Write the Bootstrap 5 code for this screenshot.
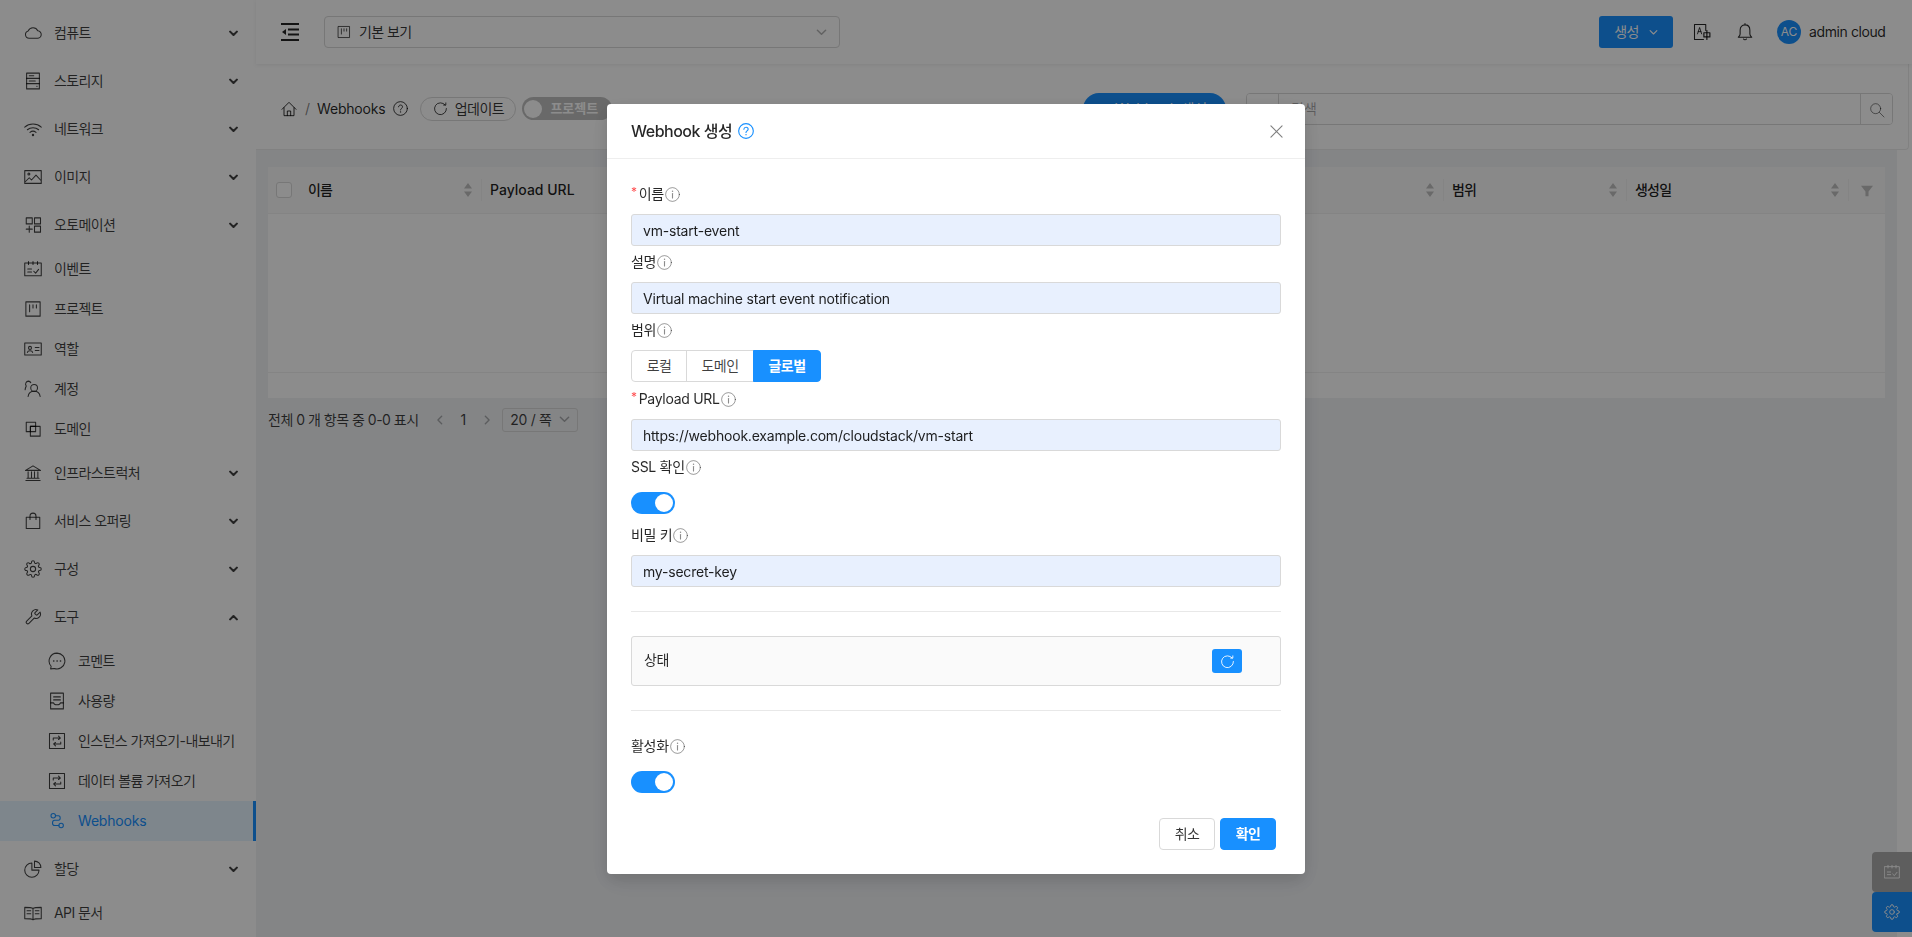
<!DOCTYPE html>
<html lang="ko">
<head>
<meta charset="utf-8">
<title>Webhooks</title>
<link href="https://cdn.jsdelivr.net/npm/bootstrap@5.3.0/dist/css/bootstrap.min.css" rel="stylesheet">
<style>
:root{--acc:#1890ff;--line:#d9d9d9;--ink:rgba(0,0,0,.85)}
html,body{height:100%}
body{font-family:Inter,"Noto Sans CJK KR",sans-serif;font-size:14px;color:var(--ink);background:#fff;overflow:hidden;line-height:22px}
.ico{width:18px;height:18px;fill:none;stroke:currentColor;stroke-width:1.4;stroke-linecap:round;stroke-linejoin:round;flex:none}
.ico-14{width:14px;height:14px}
.ico-15{width:15px;height:15px}
.ico-16{width:16px;height:16px}
.ico-12{width:12px;height:12px}
.ko-tight{letter-spacing:-.6px}
.lat-tight{letter-spacing:-.2px}
.side-nav{width:256px;flex:none;padding-top:9px;background:#fff;height:100vh;overflow:hidden}
.side-link{display:flex;align-items:center;height:40px;padding-left:24px;color:rgba(0,0,0,.75);gap:12px;text-decoration:none;white-space:nowrap;letter-spacing:-.6px}
.side-parent{height:48px;padding-right:18px}
.side-parent .caret-ico{margin-left:auto;width:9px;height:9px;stroke-width:2.8}
.side-sub{padding:0 0 4px}
.side-sub .side-link{padding-left:48px}
.side-on{background:#e6f4ff;color:var(--acc);border-right:3px solid var(--acc);letter-spacing:-.2px}
.main-col{min-width:0}
.top-bar{height:64px;background:#fff;padding:0 24px 0 25px;box-shadow:0 1px 4px rgba(0,21,41,.08);position:relative;gap:25px}
.view-pick{width:516px;height:32px;border:1px solid var(--line);border-radius:4px;padding:0 12px;gap:8px;color:rgba(0,0,0,.8);letter-spacing:-.6px}
.view-pick .caret-ico{margin-left:auto;width:11px;height:11px;color:rgba(0,0,0,.3);stroke-width:1.6}
.make-btn{width:74px;height:32px;background:var(--acc);color:#fff;border:0;border-radius:3px;padding:0;gap:10px;font-size:14px;letter-spacing:-.6px}
.make-btn svg{width:9px;height:9px;stroke-width:1.5}
.gap-a{margin-left:20px}.gap-b{margin-left:25px}.gap-c{margin-left:23px}
.ava{width:24px;height:24px;border-radius:50%;background:var(--acc);color:#fff;font-size:12px;line-height:24px;text-align:center}
.who{letter-spacing:-.4px;width:79px;white-space:nowrap}
.page-head{height:86px;padding:4px 15px 0 25px;margin-right:3px;background:#fff;border:solid #ececec;border-width:0 1px 1px 0;border-bottom-right-radius:4px}
.crumb-sep{margin:0 7px 0 8px;color:rgba(0,0,0,.5)}
.pill-btn{height:24px;width:96px;border:1px solid var(--line);border-radius:12px;background:#fff;padding:0;gap:7px;font-size:14px;color:rgba(0,0,0,.8);margin-left:12px;letter-spacing:-.6px}
.pill-btn svg{width:15px;height:15px}
.scope-tog{width:90px;height:23px;border-radius:12px;background:rgba(0,0,0,.25);color:#fff;font-size:13px;font-weight:600;padding:0 2px;gap:8px;margin-left:6px;line-height:23px}
.scope-tog i{width:18px;height:18px;border-radius:50%;background:#fff;display:block;flex:none}
.add-pill{width:143px;height:32px;border-radius:16px;background:var(--acc);color:#fff;border:0;margin-left:auto;font-size:14px}
.find-box{width:647px;height:32px;margin-left:20px;border:1px solid var(--line);border-radius:4px;overflow:hidden}
.find-box button{width:32px;border:0;background:#fff;padding:0;color:rgba(0,0,0,.5)}
.find-box button:first-child{border-right:1px solid var(--line)}
.find-box button:last-child{border-left:1px solid var(--line)}
.find-box input{border:0;outline:0;flex:1;padding:0 12px;font-size:14px;min-width:0}
.find-box input::placeholder{color:rgba(0,0,0,.35)}
.work-area{margin-right:15px;background:#f0f2f5;height:787px;padding:17px 12px 0}
.grid-card{background:#fff}
.grid-card .table{table-layout:fixed;margin:0;--bs-table-bg:transparent;font-size:14px}
.grid-card th{height:46px;padding:0;background:#fafafa;font-weight:500;color:rgba(0,0,0,.88);border-bottom:1px solid #f0f0f0;vertical-align:middle}
.grid-card td{height:159px;border-bottom:1px solid #f0f0f0;padding:0}
.th-in{display:flex;align-items:center;justify-content:space-between;height:22px;padding:0 9px 0 8px;border-right:1px solid #f0f0f0}
.th-ko{letter-spacing:-.8px}
.fake-check{display:block;width:16px;height:16px;border:1px solid var(--line);border-radius:3px;background:#fff;margin-left:8px}
.sort-ico{width:8px;height:14px;fill:#bfbfbf;flex:none}
.grid-tail{height:25px}
.pager{margin-top:10px;height:24px;color:rgba(0,0,0,.75)}
.pager .arrow{width:10px;height:10px;color:rgba(0,0,0,.3);stroke-width:1.6}
.pager-sum{letter-spacing:-.5px}
.size-pick{width:76px;height:24px;border:1px solid var(--line);border-radius:3px;padding:0 7px;margin-left:10px;justify-content:space-between;letter-spacing:-.3px}
.size-pick svg{width:11px;height:11px;color:rgba(0,0,0,.3);stroke-width:1.6}
.float-dock{position:fixed;right:0;bottom:5px;width:40px}
.float-dock div{height:40px;display:flex;align-items:center;justify-content:center;color:#fff;border-radius:4px 0 0 4px}
.dock-grey{background:#ababab}
.dock-blue{background:var(--acc)}
.modal-backdrop.show{opacity:.45}
.hook-dialog{width:698px;max-width:698px;margin:104px auto 0}
.hook-dialog .modal-content{border:0;border-radius:4px;box-shadow:0 6px 16px rgba(0,0,0,.12),0 9px 28px rgba(0,0,0,.05)}
.hook-dialog .modal-header{height:55px;padding:0 22px 0 24px;border-bottom:1px solid #eee;align-items:center}
.hook-dialog .modal-title{font-size:16px;font-weight:500;line-height:22px;gap:6px;letter-spacing:-.5px}
.hook-dialog .modal-title svg{width:16px;height:16px;color:var(--acc);stroke-width:1.7}
.close-x{width:13px;height:13px;color:rgba(0,0,0,.5);stroke-width:1.2}
.hook-dialog .modal-body{padding:24px 24px 24px}
.fld-label{display:flex;align-items:center;height:22px;margin-bottom:9px;gap:1px;color:rgba(0,0,0,.85);letter-spacing:-.3px}
.fld-label svg{width:15px;height:15px;color:rgba(0,0,0,.45);stroke-width:1.4}
.req{color:#ff4d4f;font-size:12px;margin-right:1px;line-height:14px;align-self:flex-start;margin-top:2px}
.fld-row{margin-bottom:5px}
.fld-input{height:32px;border:1px solid var(--line);border-radius:3px;background:#e8f0fe;padding:0 11px;font-size:14px;color:rgba(0,0,0,.88);line-height:22px;letter-spacing:-.2px}
.fld-input:focus{background:#e8f0fe;box-shadow:none;border-color:var(--line)}
.seg-wrap{margin-bottom:1px;display:inline-flex;height:32px;vertical-align:top}
.seg-wrap .seg-opt{font-size:14px;height:32px;padding:0;line-height:30px;border-color:var(--line);color:rgba(0,0,0,.75);--bs-btn-border-radius:4px;background:#fff;letter-spacing:-.6px}
.seg-wrap .btn-check:checked+.seg-opt{background:var(--acc);border-color:var(--acc);color:#fff;font-weight:600}
.seg-w55{width:56px}.seg-w68{width:68px}
.tog-row{height:32px;display:flex;align-items:center;padding:0;margin:0}
.tog-row .form-check-input{width:44px;height:22px;margin:0;float:none;border:0;background-color:var(--acc);background-position:right center;background-image:url("data:image/svg+xml,%3csvg xmlns='http://www.w3.org/2000/svg' viewBox='-4 -4 8 8'%3e%3ccircle r='3.27' fill='%23fff'/%3e%3c/svg%3e");box-shadow:none}
.rule-line{margin:24px 0;border:0;border-top:1px solid #e8e8e8;opacity:1}
.state-box{height:50px;border:1px solid var(--line);border-radius:3px;background:#fafafa;padding:0 38px 0 12px}
.state-txt{padding-bottom:2px;letter-spacing:-.5px}
.state-btn{width:30px;height:24px;background:var(--acc);color:#fff;border:0;border-radius:3px;padding:0}
.state-btn svg{width:15px;height:15px}
.foot-btns{margin-top:20px;padding-right:5px;gap:5px}
.foot-btn{width:56px;height:32px;padding:0;font-size:14px;border-radius:4px;line-height:30px;letter-spacing:-.6px}
.foot-no{border:1px solid var(--line);background:#fff;color:rgba(0,0,0,.8)}
.foot-yes{border:1px solid var(--acc);background:var(--acc);color:#fff;font-weight:600}
</style>
</head>
<body>
<svg width="0" height="0" class="position-absolute">
<defs>
<symbol id="i-cloud" viewBox="0 0 24 24"><path d="M6.8 19a5 5 0 0 1-1.200-9.800A7 7 0 0 1 18.400 9a5 5 0 0 1-.9 10z"/></symbol>
<symbol id="i-db" viewBox="0 0 24 24"><rect x="3.500" y="1.500" width="17" height="21"/><path d="M3.500 8.500h17M3.500 15.500h17M7 5h6M7 12h8M17 19h.5"/></symbol>
<symbol id="i-wifi" viewBox="0 0 24 24"><path d="M1 9.500c6-5.500 16-5.500 22 0M4.500 13c4-3.500 11-3.500 15 0M8 16.500c2.200-1.800 5.800-1.800 8 0"/><circle cx="12" cy="20" r=".9"/></symbol>
<symbol id="i-pic" viewBox="0 0 24 24"><rect x="1" y="3.500" width="22" height="17"/><circle cx="6.500" cy="8" r="1.300"/><path d="M2 18l5-5 3 3 6-6.500 6 6.500"/></symbol>
<symbol id="i-apps" viewBox="0 0 24 24"><rect x="3" y="2.500" width="8" height="8"/><rect x="14" y="2.500" width="8" height="8"/><rect x="14" y="13.500" width="8" height="8"/><path d="M7 13.500v8M3 17.500h8"/></symbol>
<symbol id="i-sched" viewBox="0 0 24 24"><rect x="1" y="4" width="22" height="17"/><path d="M6 2v4M12 2v4M18 2v4M5 12h5M5 16h5M13 15l2.500 2.500 4-5"/></symbol>
<symbol id="i-proj" viewBox="0 0 24 24"><rect x="2.500" y="2.500" width="19" height="19"/><path d="M7.500 6.500v9M12 6.500v4M16.500 6.500v4"/></symbol>
<symbol id="i-idc" viewBox="0 0 24 24"><rect x="1" y="4" width="22" height="16"/><circle cx="8" cy="10.500" r="2"/><path d="M4.500 16.500c.5-3 6.500-3 7 0M15 10h5M15 14h5"/></symbol>
<symbol id="i-team" viewBox="0 0 24 24"><circle cx="13.500" cy="10.500" r="4.500"/><path d="M5.500 22c.5-5 3.500-7 8-7s7.500 2 8 7M9 3.500A4 4 0 0 0 6 1.500a4 4 0 0 0-3 6.500c-.8 1.600-1.400 3-1.500 5"/></symbol>
<symbol id="i-block" viewBox="0 0 24 24"><path d="M8.500 15.500H3V3h12.500v5.500"/><rect x="8.500" y="8.500" width="13" height="13"/><path d="M8.500 8.500h7v7h-7z"/></symbol>
<symbol id="i-bank" viewBox="0 0 24 24"><path d="M2 8.500L12 2.500l10 6zM2.500 22h19M4 19h16M5.500 10.500V19M10 10.500V19M14 10.500V19M18.500 10.500V19"/></symbol>
<symbol id="i-bag" viewBox="0 0 24 24"><rect x="3" y="7" width="18" height="15"/><path d="M8 10V5.500a4 4 0 0 1 8 0V10"/></symbol>
<symbol id="i-gear" viewBox="0 0 24 24"><circle cx="12" cy="12" r="3.500"/><path d="M19.400 15a1.650 1.650 0 0 0 .33 1.820l.06.06a2 2 0 0 1 0 2.830 2 2 0 0 1-2.830 0l-.06-.06a1.650 1.650 0 0 0-1.820-.33 1.650 1.650 0 0 0-1 1.510V21a2 2 0 0 1-2 2 2 2 0 0 1-2-2v-.09A1.650 1.650 0 0 0 9 19.400a1.650 1.650 0 0 0-1.820.33l-.06.06a2 2 0 0 1-2.830 0 2 2 0 0 1 0-2.830l.06-.06a1.650 1.650 0 0 0 .33-1.820 1.650 1.650 0 0 0-1.510-1H3a2 2 0 0 1-2-2 2 2 0 0 1 2-2h.09A1.650 1.650 0 0 0 4.600 9a1.650 1.650 0 0 0-.33-1.820l-.06-.06a2 2 0 0 1 0-2.830 2 2 0 0 1 2.830 0l.06.06a1.650 1.650 0 0 0 1.820.33H9a1.650 1.650 0 0 0 1-1.510V3a2 2 0 0 1 2-2 2 2 0 0 1 2 2v.09a1.650 1.650 0 0 0 1 1.510 1.650 1.650 0 0 0 1.820-.33l.06-.06a2 2 0 0 1 2.830 0 2 2 0 0 1 0 2.830l-.06.06a1.650 1.650 0 0 0-.33 1.820V9a1.650 1.650 0 0 0 1.510 1H21a2 2 0 0 1 2 2 2 2 0 0 1-2 2h-.09a1.650 1.650 0 0 0-1.510 1z"/></symbol>
<symbol id="i-tool" viewBox="0 0 24 24"><path d="M14.700 6.300a1 1 0 0 0 0 1.400l1.600 1.600a1 1 0 0 0 1.400 0l3.770-3.770a6 6 0 0 1-7.940 7.940l-6.910 6.910a2.120 2.120 0 0 1-3-3l6.910-6.910a6 6 0 0 1 7.940-7.940l-3.760 3.760z"/></symbol>
<symbol id="i-chat" viewBox="0 0 24 24"><path d="M12 1.500a10.500 10.500 0 1 1-3.500 20.400L3.500 22.500l.7-3.500A10.500 10.500 0 0 1 12 1.500z"/><path d="M7.500 12h.3M12 12h.3M16.500 12h.3" stroke-width="2"/></symbol>
<symbol id="i-recon" viewBox="0 0 24 24"><rect x="3.500" y="1.500" width="17" height="21"/><path d="M7.500 6.500h9M7.500 10.500h9M3.500 14.500h4c.5 3.500 8.500 3.500 9 0h4"/></symbol>
<symbol id="i-swap" viewBox="0 0 24 24"><rect x="2" y="2" width="20" height="20"/><path d="M7 10.500V8h9M14 5.500L16.500 8 14 10M17 13.500V16H8M10 18.500L7.500 16 10 14"/></symbol>
<symbol id="i-hook" viewBox="0 0 24 24"><circle cx="7" cy="5" r="3"/><circle cx="17.500" cy="18" r="3"/><path d="M10 5h4c3 0 3 6 0 6h-5c-4 0-4 7 0 7h5.500"/></symbol>
<symbol id="i-pie" viewBox="0 0 24 24"><path d="M10.500 4a9.500 9.500 0 1 0 9.500 9.500H10.500z"/><path d="M14 1.500a8.500 8.500 0 0 1 8.500 8.500H14z"/></symbol>
<symbol id="i-book" viewBox="0 0 24 24"><path d="M12 6c-2-1.500-7-1.500-11-1.500v15c4 0 9 0 11 1.500 2-1.500 7-1.500 11-1.500v-15C19 4.500 14 4.500 12 6zM12 6v15M4 9h5M4 13h5M15 9h5M15 13h5"/></symbol>
<symbol id="i-down" viewBox="0 0 12 12"><path d="M1.500 3.500L6 8l4.500-4.500"/></symbol>
<symbol id="i-up" viewBox="0 0 12 12"><path d="M1.500 8.500L6 4l4.500 4.500"/></symbol>
<symbol id="i-left" viewBox="0 0 12 12"><path d="M8 1.500L3.500 6 8 10.500"/></symbol>
<symbol id="i-right" viewBox="0 0 12 12"><path d="M4 1.500L8.500 6 4 10.500"/></symbol>
<symbol id="i-menu" viewBox="0 0 18 18"><path d="M0 1h18M0 17h18M7 6.500h11M7 11.500h11" stroke-width="1.800" stroke-linecap="butt"/><path d="M1 9l4-3v6z" fill="currentColor" stroke="none"/></symbol>
<symbol id="i-trans" viewBox="0 0 24 24"><path d="M14 22H2V2h15v8"/><path d="M6 14.500L8.800 6l2.700 8.500M7 11.500h3.500" stroke-width="1.200"/><rect x="14.500" y="13" width="8" height="5.500" stroke-width="1.600"/><path d="M18.500 10v12" stroke-width="1.600"/></symbol>
<symbol id="i-bell" viewBox="0 0 24 24"><path d="M12 2.500c-4 0-6.500 3-6.500 7v5c0 2.500-1.500 3.500-2.500 4.500h18c-1-1-2.500-2-2.500-4.500v-5c0-4-2.500-7-6.500-7zM12 .8v1.700M10 21.300c1 1.300 3 1.300 4 0"/></symbol>
<symbol id="i-home" viewBox="0 0 24 24"><path d="M1.500 12.500L12 2l10.500 10.500M4.500 10v12h15V10M9.500 22v-7h5v7"/></symbol>
<symbol id="i-help" viewBox="0 0 24 24"><circle cx="12" cy="12" r="11"/><path d="M8.800 9.300c.3-4 6.400-4 6.400 0 0 2.600-3.200 2.500-3.200 5"/><path d="M12 17.500h.1" stroke-width="2"/></symbol>
<symbol id="i-info" viewBox="0 0 24 24"><circle cx="12" cy="12" r="11"/><path d="M12 10.500v7" stroke-width="1.800"/><path d="M12 6.800h.1" stroke-width="2.200"/></symbol>
<symbol id="i-reload" viewBox="0 0 24 24"><path d="M19.500 6.500A9.500 9.500 0 1 0 21.500 12"/><path d="M20.500 3v3.500H17"/></symbol>
<symbol id="i-search" viewBox="0 0 24 24"><circle cx="10" cy="10" r="7.500"/><path d="M15.500 15.500l7 7"/></symbol>
<symbol id="i-x" viewBox="0 0 14 14"><path d="M1 1l12 12M13 1L1 13"/></symbol>
<symbol id="i-sort" viewBox="0 0 8 14"><path d="M4 0l4 5.500H0zM4 14l4-5.500H0z" stroke="none"/></symbol>
<symbol id="i-funnel" viewBox="0 0 14 14"><path d="M0 1h14L8.800 7.500V13H5.200V7.500z" fill="#bfbfbf" stroke="none"/></symbol>
</defs>
</svg>

<div class="d-flex vh-100">
  <aside class="side-nav">
    <a class="side-link side-parent" href="#"><svg class="ico"><use href="#i-cloud"/></svg>컴퓨트<svg class="ico caret-ico"><use href="#i-down"/></svg></a>
    <a class="side-link side-parent" href="#"><svg class="ico"><use href="#i-db"/></svg>스토리지<svg class="ico caret-ico"><use href="#i-down"/></svg></a>
    <a class="side-link side-parent" href="#"><svg class="ico"><use href="#i-wifi"/></svg>네트워크<svg class="ico caret-ico"><use href="#i-down"/></svg></a>
    <a class="side-link side-parent" href="#"><svg class="ico"><use href="#i-pic"/></svg>이미지<svg class="ico caret-ico"><use href="#i-down"/></svg></a>
    <a class="side-link side-parent" href="#"><svg class="ico"><use href="#i-apps"/></svg>오토메이션<svg class="ico caret-ico"><use href="#i-down"/></svg></a>
    <a class="side-link" href="#"><svg class="ico"><use href="#i-sched"/></svg>이벤트</a>
    <a class="side-link" href="#"><svg class="ico"><use href="#i-proj"/></svg>프로젝트</a>
    <a class="side-link" href="#"><svg class="ico"><use href="#i-idc"/></svg>역할</a>
    <a class="side-link" href="#"><svg class="ico"><use href="#i-team"/></svg>계정</a>
    <a class="side-link" href="#"><svg class="ico"><use href="#i-block"/></svg>도메인</a>
    <a class="side-link side-parent" href="#"><svg class="ico"><use href="#i-bank"/></svg>인프라스트럭처<svg class="ico caret-ico"><use href="#i-down"/></svg></a>
    <a class="side-link side-parent" href="#"><svg class="ico"><use href="#i-bag"/></svg>서비스 오퍼링<svg class="ico caret-ico"><use href="#i-down"/></svg></a>
    <a class="side-link side-parent" href="#"><svg class="ico"><use href="#i-gear"/></svg>구성<svg class="ico caret-ico"><use href="#i-down"/></svg></a>
    <a class="side-link side-parent" href="#"><svg class="ico"><use href="#i-tool"/></svg>도구<svg class="ico caret-ico"><use href="#i-up"/></svg></a>
    <div class="side-sub">
      <a class="side-link" href="#"><svg class="ico"><use href="#i-chat"/></svg>코멘트</a>
      <a class="side-link" href="#"><svg class="ico"><use href="#i-recon"/></svg>사용량</a>
      <a class="side-link" href="#"><svg class="ico"><use href="#i-swap"/></svg>인스턴스 가져오기-내보내기</a>
      <a class="side-link" href="#"><svg class="ico"><use href="#i-swap"/></svg>데이터 볼륨 가져오기</a>
      <a class="side-link side-on" href="#"><svg class="ico"><use href="#i-hook"/></svg>Webhooks</a>
    </div>
    <a class="side-link side-parent" href="#"><svg class="ico"><use href="#i-pie"/></svg>할당<svg class="ico caret-ico"><use href="#i-down"/></svg></a>
    <a class="side-link" href="#"><svg class="ico"><use href="#i-book"/></svg>API 문서</a>
  </aside>

  <div class="main-col flex-grow-1">
    <header class="top-bar d-flex align-items-center">
      <svg class="ico"><use href="#i-menu"/></svg>
      <div class="view-pick d-flex align-items-center"><svg class="ico ico-14"><use href="#i-proj"/></svg>기본 보기<svg class="ico caret-ico"><use href="#i-down"/></svg></div>
      <div class="d-flex align-items-center ms-auto">
        <button class="make-btn d-flex align-items-center justify-content-center">생성<svg class="ico"><use href="#i-down"/></svg></button>
        <svg class="ico gap-a"><use href="#i-trans"/></svg>
        <svg class="ico gap-b"><use href="#i-bell"/></svg>
        <div class="ava gap-c">AC</div>
        <span class="ms-2 who">admin cloud</span>
      </div>
    </header>

    <section class="page-head d-flex align-items-center">
      <svg class="ico ico-16"><use href="#i-home"/></svg>
      <span class="crumb-sep">/</span>
      <span class="lat-tight">Webhooks</span>
      <svg class="ico ico-15 ms-2"><use href="#i-help"/></svg>
      <button class="pill-btn d-flex align-items-center justify-content-center"><svg class="ico"><use href="#i-reload"/></svg>업데이트</button>
      <div class="scope-tog d-flex align-items-center"><i></i>프로젝트</div>
      <button class="add-pill">+ Webhook 생성</button>
      <div class="find-box d-flex">
        <button><svg class="ico ico-14"><use href="#i-funnel"/></svg></button>
        <input type="text" placeholder="검색">
        <button><svg class="ico ico-16"><use href="#i-search"/></svg></button>
      </div>
    </section>

    <section class="work-area">
      <div class="grid-card">
        <table class="table">
          <colgroup><col style="width:32px"><col style="width:182px"><col style="width:481px"><col style="width:481px"><col style="width:183px"><col style="width:222px"><col style="width:36px"></colgroup>
          <thead>
            <tr>
              <th><span class="fake-check"></span></th>
              <th class="th-ko"><div class="th-in">이름<svg class="sort-ico"><use href="#i-sort"/></svg></div></th>
              <th><div class="th-in">Payload URL<svg class="sort-ico"><use href="#i-sort"/></svg></div></th>
              <th class="th-ko"><div class="th-in">상태<svg class="sort-ico"><use href="#i-sort"/></svg></div></th>
              <th class="th-ko"><div class="th-in">범위<svg class="sort-ico"><use href="#i-sort"/></svg></div></th>
              <th class="th-ko"><div class="th-in">생성일<svg class="sort-ico"><use href="#i-sort"/></svg></div></th>
              <th class="text-center"><svg class="ico ico-12"><use href="#i-funnel"/></svg></th>
            </tr>
          </thead>
          <tbody><tr><td colspan="7"></td></tr></tbody>
        </table>
        <div class="grid-tail"></div>
      </div>
      <div class="pager d-flex align-items-center">
        <span class="pager-sum">전체 0 개 항목 중 0-0 표시</span>
        <svg class="ico arrow ms-3"><use href="#i-left"/></svg>
        <span class="mx-3">1</span>
        <svg class="ico arrow"><use href="#i-right"/></svg>
        <div class="size-pick d-flex align-items-center">20 / 쪽<svg class="ico"><use href="#i-down"/></svg></div>
      </div>
    </section>
  </div>
</div>

<div class="float-dock">
  <div class="dock-grey"><svg class="ico ico-16"><use href="#i-sched"/></svg></div>
  <div class="dock-blue"><svg class="ico ico-16"><use href="#i-gear"/></svg></div>
</div>

<div class="modal-backdrop show"></div>
<div class="modal d-block" tabindex="-1">
  <div class="modal-dialog hook-dialog">
    <div class="modal-content">
      <div class="modal-header">
        <h5 class="modal-title d-flex align-items-center">Webhook 생성<svg class="ico"><use href="#i-help"/></svg></h5>
        <svg class="ico close-x ms-auto"><use href="#i-x"/></svg>
      </div>
      <div class="modal-body">
        <form>
          <div class="fld-row">
            <label class="fld-label"><span class="req">*</span>이름<svg class="ico"><use href="#i-info"/></svg></label>
            <input class="form-control fld-input" value="vm-start-event">
          </div>
          <div class="fld-row">
            <label class="fld-label">설명<svg class="ico"><use href="#i-info"/></svg></label>
            <input class="form-control fld-input" value="Virtual machine start event notification">
          </div>
          <div class="fld-row">
            <label class="fld-label">범위<svg class="ico"><use href="#i-info"/></svg></label>
            <div class="btn-group seg-wrap" role="group">
              <input type="radio" class="btn-check" name="scope" id="sc1"><label class="btn seg-opt seg-w55" for="sc1">로컬</label>
              <input type="radio" class="btn-check" name="scope" id="sc2"><label class="btn seg-opt seg-w68" for="sc2">도메인</label>
              <input type="radio" class="btn-check" name="scope" id="sc3" checked><label class="btn seg-opt seg-w68" for="sc3">글로벌</label>
            </div>
          </div>
          <div class="fld-row">
            <label class="fld-label"><span class="req">*</span>Payload URL<svg class="ico"><use href="#i-info"/></svg></label>
            <input class="form-control fld-input" value="https://webhook.example.com/cloudstack/vm-start">
          </div>
          <div class="fld-row">
            <label class="fld-label">SSL 확인<svg class="ico"><use href="#i-info"/></svg></label>
            <div class="form-check form-switch tog-row"><input class="form-check-input" type="checkbox" role="switch" checked></div>
          </div>
          <div>
            <label class="fld-label">비밀 키<svg class="ico"><use href="#i-info"/></svg></label>
            <input class="form-control fld-input" value="my-secret-key">
          </div>
          <hr class="rule-line">
          <div class="state-box d-flex align-items-center justify-content-between">
            <span class="state-txt">상태</span>
            <button type="button" class="state-btn d-flex align-items-center justify-content-center"><svg class="ico"><use href="#i-reload"/></svg></button>
          </div>
          <hr class="rule-line">
          <div>
            <label class="fld-label">활성화<svg class="ico"><use href="#i-info"/></svg></label>
            <div class="form-check form-switch tog-row"><input class="form-check-input" type="checkbox" role="switch" checked></div>
          </div>
          <div class="foot-btns d-flex justify-content-end">
            <button type="button" class="btn foot-btn foot-no">취소</button>
            <button type="button" class="btn foot-btn foot-yes">확인</button>
          </div>
        </form>
      </div>
    </div>
  </div>
</div>
<script src="https://cdn.jsdelivr.net/npm/bootstrap@5.3.0/dist/js/bootstrap.bundle.min.js"></script>
</body>
</html>
